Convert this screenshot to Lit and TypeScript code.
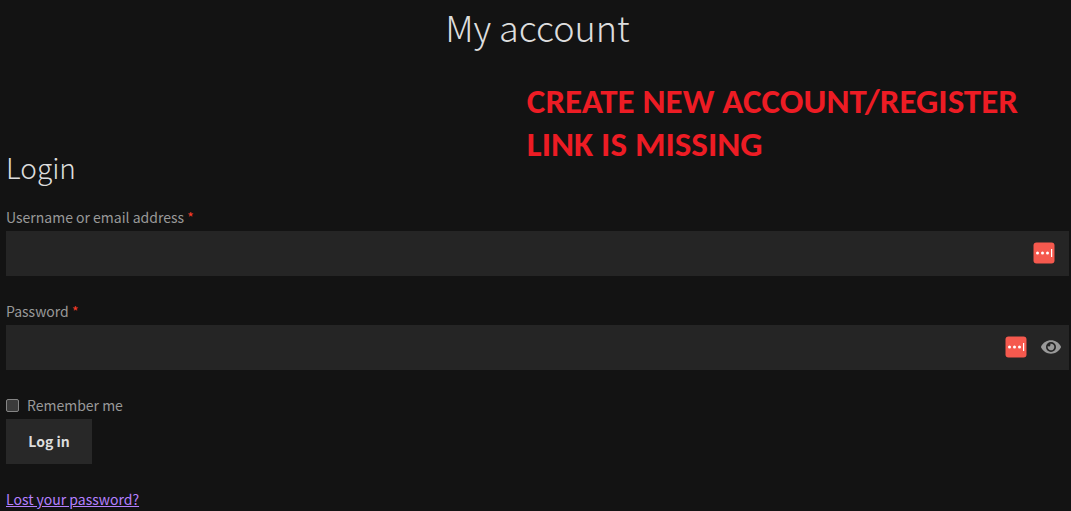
import { LitElement, html, css, svg, nothing } from "lit";
import { customElement, property, state } from "lit/decorators.js";

@customElement("credential-badge")
class CredentialBadge extends LitElement {
  static styles = css`
    :host { display: block; height: 22px; }
    .badge { display: block; }
  `;

  render() {
    return html`<svg class="badge" width="22" height="22" viewBox="0 0 22 22" aria-hidden="true">
      <rect x="0.5" y="0.5" width="21" height="21" rx="3" fill="#f5594e" />
      <g fill="#fff">
        <circle cx="4.5" cy="11" r="1.5" />
        <circle cx="9.5" cy="11" r="1.5" />
        <circle cx="14.5" cy="11" r="1.5" />
        <rect x="18" y="7" width="1.2" height="8" />
      </g>
    </svg>`;
  }
}

@customElement("text-field")
class TextField extends LitElement {
  static styles = css`
    :host { display: block; }
    .label { display: block; padding-bottom: 1px; line-height: 26px; }
    .required { color: #fa3c28; }
    .box { display: flex; align-items: center; height: 45px; background: #252525; }
    .input {
      flex: 1;
      min-width: 0;
      height: 45px;
      box-sizing: border-box;
      padding: 0 10px;
      border: 0;
      outline-offset: -1px;
      background: transparent;
      color: #ddd;
      font: inherit;
    }
    .tools { display: flex; align-items: center; gap: 14px; padding: 0 14px 2px 0; }
    .tools.with-toggle { padding-right: 8px; }
    .toggle { display: block; padding: 0; border: 0; background: none; color: #999; cursor: pointer; }
    .eye { display: block; }
  `;

  @property() label = "";
  @property() name = "";
  @property({ type: Boolean }) secret = false;
  @state() private revealed = false;

  private eye() {
    return html`<button
      class="toggle"
      type="button"
      aria-label="Show password"
      @click=${() => (this.revealed = !this.revealed)}
    >
      ${html`<svg class="eye" width="20" height="18" viewBox="0 0 576 512" aria-hidden="true">
        ${svg`<path fill="currentColor" d="M572.52 241.4C518.29 135.59 410.93 64 288 64S57.68 135.64 3.48 241.41a32.35 32.35 0 0 0 0 29.19C57.71 376.41 165.07 448 288 448s230.32-71.64 284.52-177.41a32.35 32.35 0 0 0 0-29.19zM288 400a144 144 0 1 1 144-144 143.93 143.93 0 0 1-144 144zm0-240a95.31 95.31 0 0 0-25.31 3.79 47.85 47.85 0 0 1-66.9 66.9A95.78 95.78 0 1 0 288 160z" />`}
      </svg>`}
    </button>`;
  }

  render() {
    return html`
      <label class="label" for="field">${this.label} <span class="required">*</span></label>
      <div class="box">
        <input
          class="input"
          id="field"
          name=${this.name}
          type=${this.secret && !this.revealed ? "password" : "text"}
          required
        />
        <div class="tools ${this.secret ? "with-toggle" : ""}">
          <credential-badge></credential-badge>
          ${this.secret ? this.eye() : nothing}
        </div>
      </div>
    `;
  }
}

@customElement("app-root")
class AppRoot extends LitElement {
  static styles = css`
    :host {
      display: block;
      min-height: 100vh;
      box-sizing: border-box;
      padding: 0 2px 0 6px;
      background: #131313;
      color: #999;
      font: 400 14px/26px "Source Sans Pro", "Noto Sans CJK SC", sans-serif;
    }
    .title {
      margin: 0;
      padding: 2px 0 30px;
      color: #ddd;
      font-size: 36px;
      font-weight: 300;
      line-height: 48px;
      text-align: center;
    }
    .intro { display: grid; grid-template-columns: 49% 1fr; }
    .subtitle {
      align-self: end;
      margin: 0;
      color: #ddd;
      font-size: 28px;
      font-weight: 300;
      line-height: 40px;
    }
    .note { margin: 0; padding-bottom: 21px; color: #ed1c24; font: 700 35px/43px Carlito, Lato, sans-serif; }
    .form { display: grid; gap: 22px; padding-top: 17px; }
    .actions { display: grid; justify-items: start; }
    .remember { display: flex; align-items: center; gap: 8px; padding-bottom: 1px; }
    .check {
      appearance: none;
      width: 13px;
      height: 13px;
      margin: 0;
      border: 1px solid #858585;
      border-radius: 2px;
      background: #3b3b3b;
    }
    .check:checked { background: #999; }
    .submit {
      min-width: 86px;
      height: 45px;
      padding: 0 22px 2px;
      border: 0;
      background: #282828;
      color: #ddd;
      font: inherit;
      font-weight: 700;
      cursor: pointer;
    }
    .lost { margin: 0; }
    .link { color: #b580ff; }
  `;

  render() {
    return html`
      <h1 class="title">My account</h1>
      <div class="intro">
        <h2 class="subtitle">Login</h2>
        <p class="note">CREATE NEW ACCOUNT/REGISTER<br />LINK IS MISSING</p>
      </div>
      <form class="form" @submit=${(e: Event) => e.preventDefault()}>
        <text-field label="Username or email address" name="username"></text-field>
        <text-field label="Password" name="password" secret></text-field>
        <div class="actions">
          <label class="remember"><input class="check" type="checkbox" name="remember" />Remember me</label>
          <button class="submit" type="submit">Log in</button>
        </div>
        <p class="lost"><a class="link" href="#lost-password">Lost your password?</a></p>
      </form>
    `;
  }
}
